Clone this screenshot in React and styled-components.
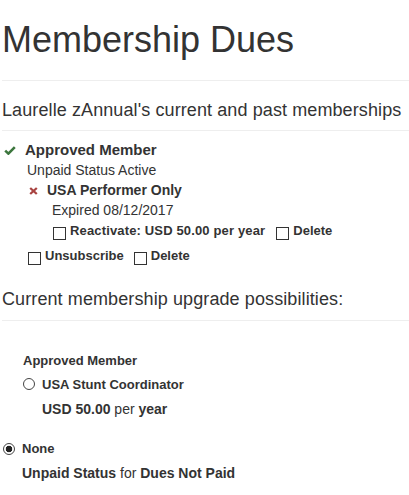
import styled, { createGlobalStyle } from "styled-components"

const GlobalStyle = createGlobalStyle`
  body {
    margin: 0;
    background: #fff;
    color: #333;
    font-family: "Liberation Sans", Arial, Helvetica, sans-serif;
    font-size: 14px;
  }
`

const Page = styled.div`
  padding-left: 2px;
`

const Title = styled.h1`
  margin: 20px 0 0;
  padding-bottom: 20px;
  border-bottom: 1px solid #eee;
  font-size: 36px;
  line-height: 40px;
  font-weight: 400;
  color: #333;
`

const SectionHeading = styled.h4`
  margin: ${p => p.$gap}px 0 0;
  padding-bottom: ${p => p.$pad}px;
  border-bottom: 1px solid #eee;
  font-size: 18px;
  line-height: 20px;
  font-weight: 400;
  color: #333;
  letter-spacing: 0.1px;
`

const Block = styled.div`
  margin-top: ${p => p.$gap}px;
`

const Line = styled.div`
  margin-top: ${p => p.$gap || 0}px;
  padding-left: ${p => p.$indent}px;
  font-size: ${p => p.$size || 14}px;
  font-weight: ${p => (p.$bold ? 700 : 400)};
  line-height: 20px;
  white-space: nowrap;
`

const Strong = styled.b`
  font-weight: 700;
`

const Plain = styled.span`
  font-weight: 400;
`

const Icon = styled.svg`
  vertical-align: ${p => p.$drop}px;
  margin-right: ${p => p.$space}px;
`

const Option = styled.label`
  margin-right: ${p => p.$space || 0}px;
  letter-spacing: ${p => p.$track || 0}px;
  cursor: pointer;
`

const Box = styled.input.attrs({ type: "checkbox" })`
  appearance: none;
  box-sizing: border-box;
  width: 13px;
  height: 13px;
  margin: 0 4px 0 0;
  border: 1px solid #333;
  background: #fff;
  vertical-align: -5px;
`

const Radio = styled.input.attrs({ type: "radio" })`
  appearance: none;
  box-sizing: border-box;
  width: 12px;
  height: 12px;
  margin: 0 ${p => p.$space}px 0 0;
  border: 1px solid #444;
  border-radius: 50%;
  background: #fff;
  vertical-align: ${p => p.$drop}px;

  &:checked {
    background: radial-gradient(circle, #222 0 3px, #fff 3.6px);
  }
`

const CheckMark = () => (
  <Icon width="12" height="9" viewBox="0 0 12 9" $drop={0} $space={9}>
    <path d="M1.2 4.6 L4.4 7.6 L10.8 1.2" fill="none" stroke="#3c763d" strokeWidth="2.6" />
  </Icon>
)

const CrossMark = () => (
  <Icon width="9" height="8" viewBox="0 0 9 8" $drop={0} $space={9}>
    <path d="M1.2 1 L7.8 7 M7.8 1 L1.2 7" fill="none" stroke="#a94442" strokeWidth="2.3" />
  </Icon>
)

export default function App() {
  return (
    <Page>
      <GlobalStyle />
      <Title>Membership Dues</Title>
      <SectionHeading $gap={19} $pad={10}>
        Laurelle zAnnual's current and past memberships
      </SectionHeading>

      <Block $gap={9}>
        <Line $indent={2} $size={15} $bold>
          <CheckMark />
          Approved Member
        </Line>
        <Line $indent={25}>Unpaid Status Active</Line>
        <Line $indent={27} $bold>
          <CrossMark />
          USA Performer Only
        </Line>
        <Line $indent={50}>Expired 08/12/2017</Line>
        <Line $indent={51} $size={13} $bold $gap={1}>
          <Option $space={11} $track={0.15}>
            <Box />
            Reactivate: USD 50.00 per year
          </Option>
          <Option>
            <Box />
            Delete
          </Option>
        </Line>
        <Line $indent={26} $size={13} $bold $gap={5}>
          <Option $space={10}>
            <Box />
            Unsubscribe
          </Option>
          <Option>
            <Box />
            Delete
          </Option>
        </Line>
      </Block>

      <SectionHeading $gap={23} $pad={11}>
        Current membership upgrade possibilities:
      </SectionHeading>

      <Block $gap={30}>
        <Line $indent={21} $size={13} $bold>Approved Member</Line>
        <Line $indent={21} $size={13} $bold $gap={4}>
          <Option>
            <Radio name="upgrade" $space={7} $drop={-1} />
            USA Stunt Coordinator
          </Option>
        </Line>
        <Line $indent={40} $gap={4}>
          <Strong>USD 50.00</Strong> per <Strong>year</Strong>
        </Line>
        <Line $indent={1} $size={13} $bold $gap={20}>
          <Option>
            <Radio name="upgrade" defaultChecked $space={7} $drop={-2} />
            None
          </Option>
        </Line>
        <Line $indent={20} $bold $gap={4}>
          Unpaid Status <Plain>for</Plain> Dues Not Paid
        </Line>
      </Block>
    </Page>
  )
}
